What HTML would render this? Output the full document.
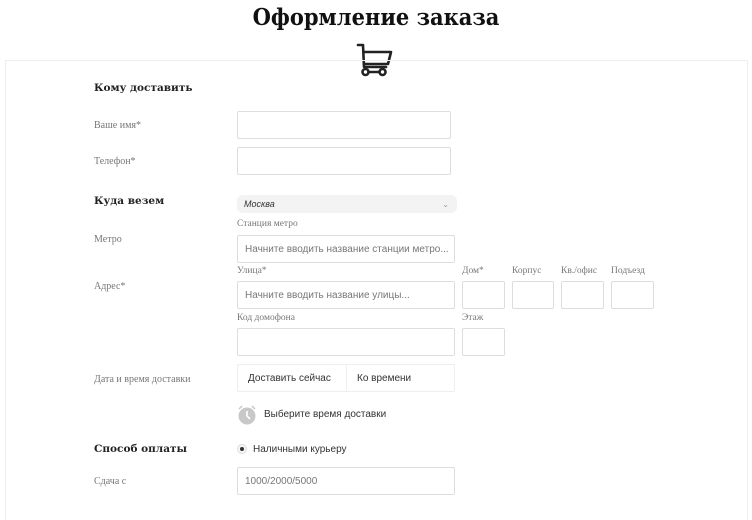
<!DOCTYPE html>
<html><head><meta charset="utf-8"><style>
*{box-sizing:border-box;margin:0;padding:0}
body{width:752px;height:507px;background:#fff;position:relative;overflow:hidden;font-family:"Liberation Sans",sans-serif;color:#333}
.a{position:absolute}
.box{left:5px;top:60px;width:743px;height:460px;border:1px solid #eee;border-bottom:none}
h1{position:absolute;left:0;width:752px;top:4px;text-align:center;font:bold 21px "DejaVu Serif",serif;color:#111;transform:scaleY(1.12)}
.h{font:bold 10.5px "DejaVu Serif",serif;color:#222}
.l{font:10px "Liberation Serif",serif;color:#777}
.in{position:absolute;border:1px solid #ddd;border-radius:2px;background:#fff;font-size:10px;color:#777;padding-left:7px;display:flex;align-items:center;white-space:nowrap;overflow:hidden}
.sl{font:9.5px "Liberation Serif",serif;color:#777;position:absolute}
</style></head><body>
<h1>Оформление заказа</h1>
<svg class="a" style="left:356px;top:42px" width="38" height="36" viewBox="0 0 38 36" fill="none" stroke="#222" stroke-width="2.6" stroke-linecap="round" stroke-linejoin="round"><path d="M2 3h5l1 22h22"/><path d="M8 10h27l-3 12H8"/><circle cx="9.5" cy="30" r="3"/><circle cx="26.5" cy="30" r="3"/><path d="M12.5 30h11"/></svg>
<div class="a box"></div>
<div class="a h" style="left:94px;top:82px">Кому доставить</div>
<div class="a l" style="left:94px;top:120px">Ваше имя*</div>
<div class="in" style="left:237px;top:111px;width:214px;height:28px"></div>
<div class="a l" style="left:94px;top:156px">Телефон*</div>
<div class="in" style="left:237px;top:147px;width:214px;height:28px"></div>
<div class="a h" style="left:94px;top:195px">Куда везем</div>
<div class="in" style="left:237px;top:195px;width:220px;height:18px;border:none;background:#f3f3f3;border-radius:6px;font-style:italic;font-size:9px;color:#333">Москва<span style="position:absolute;right:8px;font-style:normal;color:#999;font-size:8px">⌄</span></div>
<div class="sl" style="left:237px;top:219px">Станция метро</div>
<div class="a l" style="left:94px;top:234px">Метро</div>
<div class="in" style="left:237px;top:235px;width:218px;height:28px">Начните вводить название станции метро...</div>
<div class="sl" style="left:237px;top:266px">Улица*</div>
<div class="sl" style="left:462px;top:266px">Дом*</div>
<div class="sl" style="left:512px;top:266px">Корпус</div>
<div class="sl" style="left:561px;top:266px">Кв./офис</div>
<div class="sl" style="left:611px;top:266px">Подъезд</div>
<div class="a l" style="left:94px;top:281px">Адрес*</div>
<div class="in" style="left:237px;top:281px;width:218px;height:28px">Начните вводить название улицы...</div>
<div class="in" style="left:462px;top:281px;width:43px;height:28px"></div>
<div class="in" style="left:512px;top:281px;width:42px;height:28px"></div>
<div class="in" style="left:561px;top:281px;width:43px;height:28px"></div>
<div class="in" style="left:611px;top:281px;width:43px;height:28px"></div>
<div class="sl" style="left:237px;top:313px">Код домофона</div>
<div class="sl" style="left:462px;top:313px">Этаж</div>
<div class="in" style="left:237px;top:328px;width:218px;height:28px"></div>
<div class="in" style="left:462px;top:328px;width:43px;height:28px"></div>
<div class="a l" style="left:94px;top:374px">Дата и время доставки</div>
<div class="in" style="left:237px;top:364px;width:218px;height:28px;color:#333;padding:0;border-color:#eee"><span style="width:109px;padding-left:10px;border-right:1px solid #eee;height:100%;display:flex;align-items:center">Доставить сейчас</span><span style="padding-left:10px">Ко времени</span></div>
<svg class="a" style="left:237px;top:404px" width="20" height="22" viewBox="0 0 20 22"><circle cx="10" cy="12" r="8.5" fill="#c8c8c8"/><path d="M10 7v5l3 3" stroke="#fff" stroke-width="1.6" fill="none"/><path d="M2 5l3-3M18 5l-3-3" stroke="#c8c8c8" stroke-width="1.5"/></svg>
<div class="a" style="left:264px;top:409px;font-size:10px;color:#333">Выберите время доставки</div>
<div class="a h" style="left:94px;top:443px">Способ оплаты</div>
<div class="a" style="left:237px;top:444px;width:10px;height:10px;border:1px solid #ddd;border-radius:50%;background:#f6f6f6"><div style="width:4px;height:4px;background:#333;border-radius:50%;margin:2px"></div></div>
<div class="a" style="left:253px;top:444px;font-size:10px;color:#333">Наличными курьеру</div>
<div class="a l" style="left:94px;top:476px">Сдача с</div>
<div class="in" style="left:237px;top:467px;width:218px;height:28px">1000/2000/5000</div>
</body></html>
